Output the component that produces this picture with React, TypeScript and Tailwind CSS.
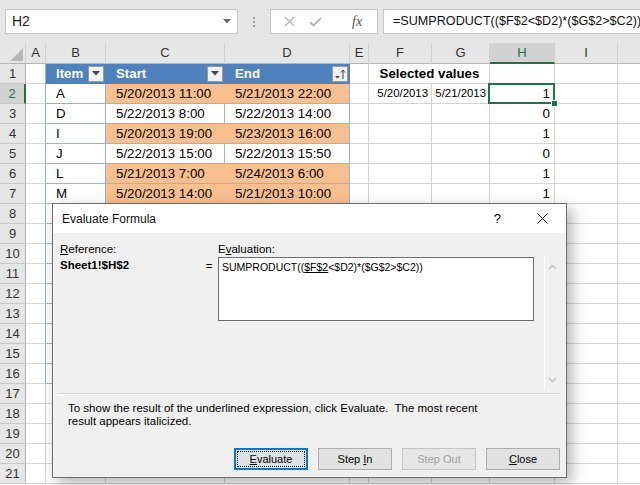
import React from "react";

type Col = { id: string; w: string };

const cols: Col[] = [
  { id: "A", w: "w-[20px]" },
  { id: "B", w: "w-[60px]" },
  { id: "C", w: "w-[119px]" },
  { id: "D", w: "w-[125px]" },
  { id: "E", w: "w-[19px]" },
  { id: "F", w: "w-[63px]" },
  { id: "G", w: "w-[58px]" },
  { id: "H", w: "w-[65px]" },
  { id: "I", w: "w-[63px]" },
  { id: "J", w: "w-[64px]" },
];

// item, start, end, highlighted, result
const data: [string, string, string, boolean, string][] = [
  ["A", "5/20/2013 11:00", "5/21/2013 22:00", true, "1"],
  ["D", "5/22/2013 8:00", "5/22/2013 14:00", false, "0"],
  ["I", "5/20/2013 19:00", "5/23/2013 16:00", true, "1"],
  ["J", "5/22/2013 15:00", "5/22/2013 15:50", false, "0"],
  ["L", "5/21/2013 7:00", "5/24/2013 6:00", true, "1"],
  ["M", "5/20/2013 14:00", "5/21/2013 10:00", true, "1"],
];

function FilterButton({ sorted }: { sorted?: boolean }) {
  return (
    <div className="w-[16px] h-[16px] shrink-0 bg-[#f2f2f2] border border-[#9a9a9a] flex items-center justify-center">
      {sorted ? (
        <svg width="12" height="12" viewBox="0 0 12 12">
          <path d="M1 8 L6 8 L3.5 10.5 Z" fill="#444" />
          <path d="M9 11 V2 M7 4.5 L9 2 L11 4.5" stroke="#444" strokeWidth="1" fill="none" />
        </svg>
      ) : (
        <svg width="8" height="5" viewBox="0 0 8 5">
          <path d="M0 0 H8 L4 4.5 Z" fill="#444" />
        </svg>
      )}
    </div>
  );
}

function FormulaBar() {
  return (
    <div className="h-[43px] bg-[#e6e6e6] flex items-start pt-[9px]">
      <div className="ml-[5px] w-[233px] h-[25px] shrink-0 bg-white border border-[#c6c6c6] flex items-center pl-[6px] pr-[6px]">
        <span className="text-[14px] text-[#222]">H2</span>
        <svg className="ml-auto" width="8" height="5" viewBox="0 0 8 5">
          <path d="M0 0 H8 L4 4.5 Z" fill="#666" />
        </svg>
      </div>
      <div className="w-[32px] h-[25px] shrink-0 flex flex-col items-center justify-center gap-[2px]">
        <div className="w-[2px] h-[2px] bg-[#9a9a9a]" />
        <div className="w-[2px] h-[2px] bg-[#9a9a9a]" />
        <div className="w-[2px] h-[2px] bg-[#9a9a9a]" />
      </div>
      <div className="w-[108px] h-[25px] shrink-0 bg-white border border-[#c6c6c6] flex items-center">
        <svg className="ml-[13px]" width="11" height="11" viewBox="0 0 11 11">
          <path d="M1 1 L10 10 M10 1 L1 10" stroke="#b4b4b4" strokeWidth="1.3" />
        </svg>
        <svg className="ml-[14px]" width="13" height="10" viewBox="0 0 13 10">
          <path d="M1 5 L4.5 8.5 L12 1" stroke="#b4b4b4" strokeWidth="1.8" fill="none" />
        </svg>
        <span className="ml-[30px] font-['Liberation_Serif',serif] italic text-[14px] text-[#555]">fx</span>
      </div>
      <div className="ml-[5px] flex-1 h-[25px] bg-white border border-r-0 border-[#c6c6c6] flex items-center pl-[9px] whitespace-nowrap overflow-hidden">
        <span className="text-[12.6px] text-[#111]">=SUMPRODUCT(($F$2&lt;$D2)*($G$2&gt;$C2))</span>
      </div>
    </div>
  );
}

function ColumnHeaders() {
  return (
    <div className="flex h-[21px] bg-[#e6e6e6]">
      <div className="w-[26px] shrink-0 h-full border-r border-b border-r-[#d0d0d0] border-b-[#b4b4b4] flex items-end justify-end pr-[2px] pb-[2px]">
        <svg width="13" height="13" viewBox="0 0 13 13">
          <path d="M13 0 V13 H0 Z" fill="#b8b8b8" />
        </svg>
      </div>
      {cols.map((c) =>
        c.id === "H" ? (
          <div
            key={c.id}
            className={c.w + " shrink-0 h-full bg-[#d2d2d2] border-r border-r-[#d0d0d0] border-b-2 border-b-[#217346] flex items-center justify-center text-[13px] text-[#217346]"}
          >
            {c.id}
          </div>
        ) : (
          <div
            key={c.id}
            className={c.w + " shrink-0 h-full border-r border-b border-r-[#d0d0d0] border-b-[#b4b4b4] flex items-center justify-center text-[13px] text-[#333]"}
          >
            {/* J sits past the right edge of the window */}
            {c.id === "J" ? "" : c.id}
          </div>
        )
      )}
    </div>
  );
}

function Cell({ r, col }: { r: number; col: Col }) {
  const id = col.id;
  const row = r >= 2 && r <= 7 ? data[r - 2] : null;
  const inTable = r <= 16 && (id === "B" || id === "C" || id === "D");
  const base = col.w + " shrink-0 h-full border-r border-b flex items-center whitespace-nowrap ";

  if (r === 1 && inTable) {
    const label = id === "B" ? "Item" : id === "C" ? "Start" : "End";
    return (
      <div className={base + "text-[13.3px] bg-[#4f81bd] border-r-[#4f81bd] border-b-[#4f81bd] pl-[10px] pr-[1px] justify-between text-white font-bold"}>
        <span>{label}</span>
        <FilterButton sorted={id === "D"} />
      </div>
    );
  }

  if (inTable) {
    const hot = row !== null && row[3] && id !== "B";
    const text = row === null ? "" : id === "B" ? row[0] : id === "C" ? row[1] : row[2];
    if (hot) {
      return (
        <div className={base + (id === "C" ? "text-[13.3px] bg-[#fabf8f] border-r-[#fabf8f] border-b-[#95b3d7] pl-[10px]" : "text-[13.3px] bg-[#fabf8f] border-r-[#95b3d7] border-b-[#95b3d7] pl-[10px]")}>
          {text}
        </div>
      );
    }
    return <div className={base + "text-[13.3px] border-r-[#95b3d7] border-b-[#95b3d7] pl-[10px]"}>{text}</div>;
  }

  if (id === "A" && r <= 16) {
    return <div className={base + "border-r-[#95b3d7] border-b-[#d4d4d4]"} />;
  }

  if (r === 1 && id === "F") {
    return (
      <div className={base + "text-[13.3px] border-r-white border-b-[#d4d4d4]"}>
        <div className="w-[121px] shrink-0 text-center font-bold">Selected values</div>
      </div>
    );
  }

  if (r === 2 && (id === "F" || id === "G")) {
    return (
      <div className={base + "border-r-[#d4d4d4] border-b-[#d4d4d4] justify-end pr-[3px] text-[11.4px]"}>
        {id === "F" ? "5/20/2013" : "5/21/2013"}
      </div>
    );
  }

  if (id === "H" && row !== null) {
    return (
      <div className={base + "text-[13.3px] relative border-r-[#d4d4d4] border-b-[#d4d4d4] justify-end pr-[4px]" + (r === 2 ? " z-10" : "")}>
        {row[4]}
        {r === 2 && (
          <>
            <div className="absolute -left-[2px] -top-[1px] -right-[1px] -bottom-[1px] border-2 border-[#217346]" />
            <div className="absolute -right-[4px] -bottom-[4px] w-[7px] h-[7px] bg-[#217346] border border-white" />
          </>
        )}
      </div>
    );
  }

  return <div className={base + "border-r-[#d4d4d4] border-b-[#d4d4d4]"} />;
}

function Row({ r }: { r: number }) {
  return (
    <div className="flex h-[20px]">
      {r === 2 ? (
        <div className="w-[26px] shrink-0 h-full bg-[#d2d2d2] border-r-2 border-r-[#217346] border-b border-b-[#c8c8c8] flex items-center justify-center text-[13px] text-[#217346]">
          {r}
        </div>
      ) : (
        <div className="w-[26px] shrink-0 h-full bg-[#e6e6e6] border-r border-b border-r-[#b4b4b4] border-b-[#c8c8c8] flex items-center justify-center text-[13px] text-[#333]">
          {r}
        </div>
      )}
      {cols.map((c) => (
        <Cell key={c.id} r={r} col={c} />
      ))}
    </div>
  );
}

function DialogButton({ children, primary, disabled }: { children: React.ReactNode; primary?: boolean; disabled?: boolean }) {
  if (primary) {
    return (
      <div className="w-[74px] h-[22px] border-2 border-[#0078d7] bg-[#e1e1e1] p-px">
        <div className="h-full border border-dotted border-black flex items-center justify-center">{children}</div>
      </div>
    );
  }
  return (
    <div
      className={
        disabled
          ? "w-[74px] h-[22px] border border-[#c4c4c4] bg-[#e6e6e6] flex items-center justify-center text-[#a0a0a0]"
          : "w-[74px] h-[22px] border border-[#adadad] bg-[#e1e1e1] flex items-center justify-center"
      }
    >
      {children}
    </div>
  );
}

function EvaluateDialog() {
  return (
    <div className="absolute left-[52px] top-[203px] w-[515px] h-[275px] border border-[#6e6e6e] bg-[#f0f0f0] shadow-[5px_5px_14px_rgba(0,0,0,0.3)] flex flex-col text-[11.5px] text-black font-['Liberation_Sans',Arial,sans-serif]">
      <div className="h-[29px] shrink-0 bg-white flex items-center">
        <span className="ml-[9px] text-[12px] text-[#111]">Evaluate Formula</span>
        <span className="ml-auto mr-[36px] text-[13px]">?</span>
        <svg className="mr-[18px]" width="11" height="11" viewBox="0 0 11 11">
          <path d="M0.5 0.5 L10.5 10.5 M10.5 0.5 L0.5 10.5" stroke="#111" strokeWidth="1" />
        </svg>
      </div>

      <div className="flex pt-[8px] pl-[7px]">
        <div className="w-[140px] shrink-0">
          <div className="h-[16px] leading-[16px]">
            <span className="underline">R</span>eference:
          </div>
          <div className="h-[16px] leading-[16px] font-bold">Sheet1!$H$2</div>
        </div>
        <div className="w-[18px] shrink-0 pt-[17px] leading-[16px] text-center">=</div>
        <div className="w-[316px] shrink-0">
          <div className="h-[16px] leading-[16px]">
            E<span className="underline">v</span>aluation:
          </div>
          <div className="h-[64px] bg-white border border-[#6e6e6e] px-[3px] pt-[2px] leading-[14px] whitespace-nowrap text-[10.5px]">
            SUMPRODUCT((<span className="underline">$F$2</span>&lt;$D2)*($G$2&gt;$C2))
          </div>
        </div>
        <div className="ml-[10px] mt-[16px] w-[16px] h-[133px] shrink-0 border-l border-white flex flex-col items-center justify-between py-[7px]">
          <svg width="9" height="6" viewBox="0 0 9 6">
            <path d="M1 5 L4.5 1.5 L8 5" stroke="#c2c2c2" strokeWidth="1.6" fill="none" />
          </svg>
          <svg width="9" height="6" viewBox="0 0 9 6">
            <path d="M1 1 L4.5 4.5 L8 1" stroke="#c2c2c2" strokeWidth="1.6" fill="none" />
          </svg>
        </div>
      </div>

      <div className="mt-[3px] mx-[5px] h-[2px] border-t border-t-[#d6d6d6] border-b border-b-white" />

      <div className="mt-[7px] ml-[15px] leading-[13px] whitespace-nowrap">
        To show the result of the underlined expression, click Evaluate.{"\u00a0"} The most recent
        <br />
        result appears italicized.
      </div>

      <div className="mt-[20px] flex justify-end gap-[10px] pr-[6px] text-[11px]">
        <DialogButton primary>
          <span>
            <span className="underline">E</span>valuate
          </span>
        </DialogButton>
        <DialogButton>
          <span>
            Step <span className="underline">I</span>n
          </span>
        </DialogButton>
        <DialogButton disabled>Step Out</DialogButton>
        <DialogButton>
          <span>
            <span className="underline">C</span>lose
          </span>
        </DialogButton>
      </div>
    </div>
  );
}

export default function App() {
  return (
    <div className="relative w-[640px] h-[485px] overflow-hidden bg-white text-black font-['Liberation_Sans',Arial,sans-serif]">
      <FormulaBar />
      <ColumnHeaders />
      {Array.from({ length: 21 }, (_, i) => (
        <Row key={i} r={i + 1} />
      ))}
      <EvaluateDialog />
    </div>
  );
}
